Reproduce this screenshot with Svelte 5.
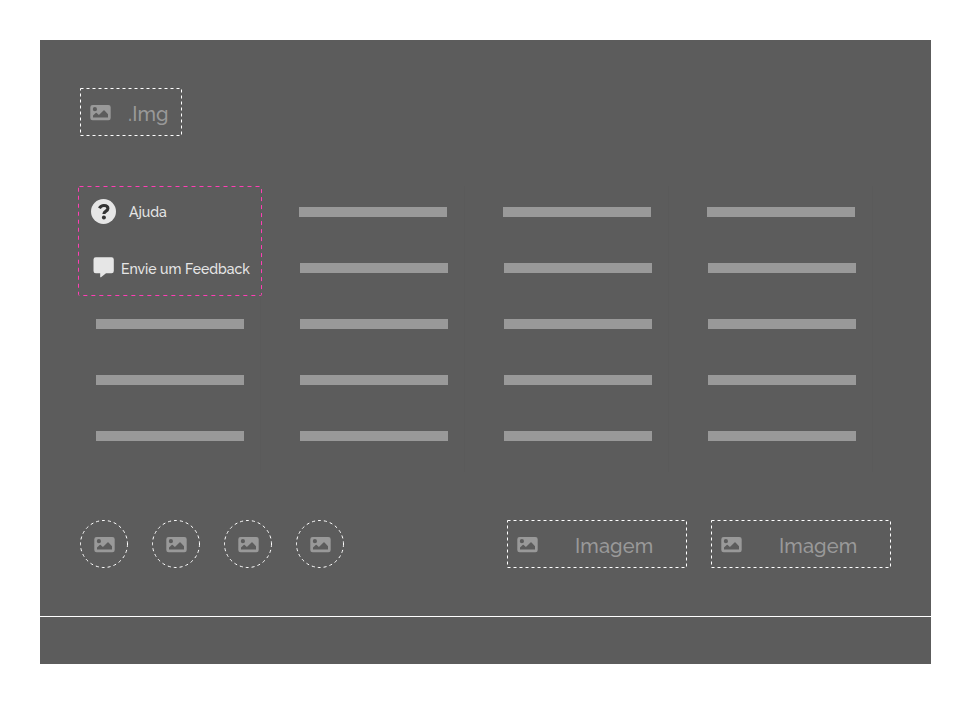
<script>
  const columns = [
    [2, 3, 4],
    [0, 1, 2, 3, 4],
    [0, 1, 2, 3, 4],
    [0, 1, 2, 3, 4]
  ];
  const socials = [1, 2, 3, 4];
  const stores = ['Imagem', 'Imagem'];
</script>

{#snippet picture()}
  <svg class="picture" width="21" height="16" viewBox="0 0 21 16">
    <path
      fill="#999"
      fill-rule="evenodd"
      d="M2.6 0H18.4Q20.7 0 20.7 2.3V13Q20.7 15.3 18.4 15.3H2.6Q.3 15.3.3 13V2.3Q.3 0 2.6 0ZM4.9 2.1A2.1 2.1 0 1 0 4.9 6.3A2.1 2.1 0 1 0 4.9 2.1ZM3 12.6H18V9.3L14.5 5.5Q14 5 13.5 5.5L8.9 10.1L6.7 8Q6.2 7.5 5.7 8L3 10.5Z"
    />
  </svg>
{/snippet}

{#snippet outline(w, h)}
  <svg class="outline" width={w} height={h}>
    <rect x=".5" y=".5" width={w - 1} height={h - 1} fill="none" stroke="#fff" stroke-dasharray="3 3" />
  </svg>
{/snippet}

<footer>
  <div class="logo">
    {@render outline(102, 48)}
    {@render picture()}
    <span class="label">.Img</span>
  </div>

  <div class="columns">
    {#each columns as rows, i}
      <div class="column">
        {#if i === 0}
          <div class="help">
            <svg class="outline" width="184" height="110">
              <rect x=".5" y=".5" width="183" height="109" rx="1" fill="none" stroke="#ff3eb5" stroke-dasharray="4 4" />
            </svg>
            <div class="link ajuda">
              <svg width="26" height="26" viewBox="0 0 26 26">
                <circle cx="13.5" cy="12.5" r="12.5" fill="#e6e6e6" />
                <path d="M9.4 9.3C10.5 7.2 11.9 6.5 13.9 6.5C16.4 6.5 17.9 7.8 17.9 9.5C17.9 12.2 13.9 12 13.9 15" fill="none" stroke="#333" stroke-width="3.1" />
                <circle cx="13.9" cy="18.6" r="2" fill="#333" />
              </svg>
              <span>Ajuda</span>
            </div>
            <div class="link feedback">
              <svg width="21" height="22" viewBox="0 0 21 22">
                <path d="M2.8.3H18.6Q20.8.3 20.8 2.6V14Q20.8 16.3 18.6 16.3H13L8 20.2Q7.2 20.7 7.2 19.7V16.3H2.8Q.5 16.3.5 14V2.6Q.5.3 2.8.3Z" fill="#e6e6e6" />
              </svg>
              <span>Envie um Feedback</span>
            </div>
          </div>
        {/if}
        {#each rows as row}
          <div class="bar" class:first={row === 0}></div>
        {/each}
      </div>
    {/each}
  </div>

  <div class="bottom">
    <div class="socials">
      {#each socials as s}
        <div class="social">
          <svg class="outline" width="48" height="48">
            <circle cx="24" cy="24" r="23.5" fill="none" stroke="#fff" stroke-dasharray="3 3" />
          </svg>
          {@render picture()}
        </div>
      {/each}
    </div>
    <div class="stores">
      {#each stores as name}
        <div class="store">
          {@render outline(180, 48)}
          {@render picture()}
          <span class="label">{name}</span>
        </div>
      {/each}
    </div>
  </div>
  <div class="legal"></div>
</footer>

<style>
  :global(body) {
    background: #fff;
  }
  footer {
    box-sizing: border-box;
    width: 891px;
    height: 624px;
    margin: 40px;
    padding-top: 48px;
    background: #5c5c5c;
    display: flex;
    flex-direction: column;
    font-family: Raleway, Lato, sans-serif;
    font-weight: 500;
  }
  svg {
    display: block;
    flex: none;
  }
  .outline {
    position: absolute;
    inset: 0;
  }
  .logo,
  .store {
    position: relative;
    display: flex;
    box-sizing: border-box;
    height: 48px;
    padding: 17px 0 0 10px;
  }
  .logo {
    width: 102px;
    margin-left: 40px;
  }
  .label {
    color: #999;
    font-size: 20px;
    line-height: 24px;
    letter-spacing: 0.12px;
    white-space: nowrap;
  }
  .logo .label {
    margin: -3px 0 0 17px;
  }
  .columns {
    display: flex;
    gap: 21px;
    height: 286px;
    margin: 50px 0 0 38px;
  }
  .column {
    box-sizing: border-box;
    width: 183px;
    padding-top: 21px;
    border-right: 1px solid #5a5a5a;
  }
  .column:first-child {
    padding-top: 0;
  }
  .bar {
    width: 148px;
    height: 10px;
    margin: 0 0 46px 18px;
    background: #999;
  }
  .bar.first {
    margin-left: 17px;
  }
  .help {
    position: relative;
    box-sizing: border-box;
    width: 184px;
    height: 110px;
    margin-bottom: 23px;
    padding-top: 12px;
  }
  .link {
    display: flex;
    align-items: center;
    height: 28px;
    color: #e6e6e6;
    font-size: 14px;
    line-height: 20px;
    white-space: nowrap;
  }
  .ajuda {
    padding-left: 12px;
    gap: 13px;
  }
  .feedback {
    margin-top: 28px;
    padding-left: 15px;
    gap: 7px;
  }
  .feedback span {
    padding-top: 2px;
  }
  .bottom {
    display: flex;
    justify-content: space-between;
    margin: 48px 40px 0;
  }
  .socials,
  .stores {
    display: flex;
    gap: 24px;
  }
  .social {
    position: relative;
    box-sizing: border-box;
    width: 48px;
    height: 48px;
    padding: 17px 0 0 14px;
  }
  .store {
    width: 180px;
  }
  .store .label {
    margin: -3px 0 0 37px;
  }
  .legal {
    height: 47px;
    margin-top: auto;
    border-top: 1px solid #fff;
  }
</style>
